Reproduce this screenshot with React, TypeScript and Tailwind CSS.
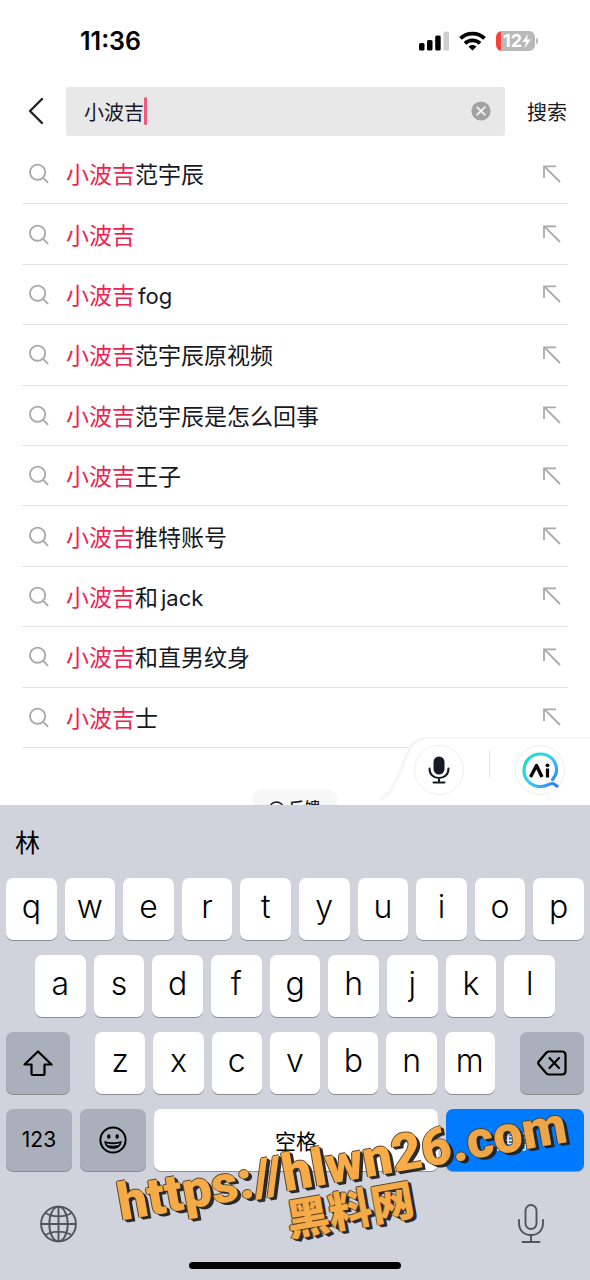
import React, { useState } from 'react';

interface Suggestion {
  rest: string;
  latin?: string;
}

const KEYWORD = '小波吉';

const suggestions: Suggestion[] = [
  { rest: '范宇辰' },
  { rest: '' },
  { rest: '', latin: 'fog' },
  { rest: '范宇辰原视频' },
  { rest: '范宇辰是怎么回事' },
  { rest: '王子' },
  { rest: '推特账号' },
  { rest: '和', latin: 'jack' },
  { rest: '和直男纹身' },
  { rest: '士' },
];

const topKeys = 'qwertyuiop'.split('');
const middleKeys = 'asdfghjkl'.split('');
const bottomKeys = 'zxcvbnm'.split('');

function StatusBar() {
  return (
    <div className="flex h-[81px] items-center justify-between pl-[80px] pr-[52px]">
      <span className="text-[25px] leading-8 font-semibold text-black">11:36</span>
      <div className="flex items-center gap-[10px]">
        <svg width="30" height="20" viewBox="0 0 30 20">
          <rect x="0" y="12" width="5.5" height="7.5" rx="1.6" fill="#000" />
          <rect x="8" y="9" width="5.5" height="10.5" rx="1.6" fill="#000" />
          <rect x="16.2" y="4.5" width="5.5" height="15" rx="1.6" fill="#000" />
          <rect x="24.5" y="0.5" width="5.5" height="19" rx="1.6" fill="#cfcfcf" />
        </svg>
        <svg width="27" height="20" viewBox="0 0 27 20" fill="none" stroke="#000" strokeWidth="3.8">
          <path d="M1.5 7.4C8.2 0.9 18.8 0.9 25.5 7.4" />
          <path d="M6 12.4C10.2 8.4 16.8 8.4 21 12.4" />
          <path d="M9.4 15.6C11.8 13.5 15.2 13.5 17.6 15.6L13.5 19.4Z" fill="#000" stroke="none" />
        </svg>
        <div className="flex items-center gap-[1px]">
          <div className="flex h-[20px] w-[39px] items-center justify-center overflow-hidden rounded-[6px] bg-linear-to-r from-[#f8403a] from-[12%] to-[#b9b9b9] to-[12%] pl-[3px] text-white">
            <span className="text-[18px] leading-5 font-bold">12</span>
            <svg width="9" height="14" viewBox="0 0 9 14" fill="currentColor">
              <path d="M6 0L0.3 8H4L2.8 14L8.8 5.6H5Z" />
            </svg>
          </div>
          <span className="h-[6px] w-[2px] rounded-r-full bg-[#b9b9b9]" />
        </div>
      </div>
    </div>
  );
}

function SearchHeader() {
  const [query, setQuery] = useState(KEYWORD);

  return (
    <form className="flex h-[60px] items-center pr-[23px]" onSubmit={(e) => e.preventDefault()}>
      <button type="button" aria-label="返回" className="flex h-10 w-[66px] items-center pl-[28px]">
        <svg width="16" height="28" viewBox="0 0 16 28" fill="none" stroke="#222" strokeWidth="2.4" strokeLinecap="round" strokeLinejoin="round">
          <path d="M14 2L2 14L14 26" />
        </svg>
      </button>
      <label className="flex h-[49px] flex-1 items-center rounded-[3px] bg-[#e8e8e8] pr-[14px] pl-[18px]">
        <input
          type="text"
          aria-label="搜索内容"
          value={query}
          onChange={(e) => setQuery(e.target.value)}
          className="field-sizing-content min-w-0 bg-transparent pt-[3px] text-[20px] leading-7 text-[#161823] caret-[#fe2c55] outline-none"
        />
        <span className="h-[28px] w-[3px] shrink-0 rounded-full bg-[#f4587c]" />
        <button type="button" aria-label="清除" className="ml-auto" onClick={() => setQuery('')}>
          <svg width="20" height="20" viewBox="0 0 20 20">
            <circle cx="10" cy="10" r="9.6" fill="#a2a2a2" />
            <path d="M6.3 6.3L13.7 13.7M13.7 6.3L6.3 13.7" stroke="#f4f4f4" strokeWidth="1.9" strokeLinecap="round" />
          </svg>
        </button>
      </label>
      <button type="submit" className="ml-[22px] pt-[3px] text-[20px] leading-7 text-[#161823]">
        搜索
      </button>
    </form>
  );
}

function SuggestionRow({ item }: { item: Suggestion }) {
  return (
    <li className="flex items-center border-b border-[#e4e4e4]">
      <button type="button" className="flex w-full items-center pl-[7px] text-left">
        <svg width="20" height="21" viewBox="0 0 20 21" fill="none" stroke="#a9a9ab" strokeWidth="1.9" strokeLinecap="round">
          <circle cx="8.6" cy="9.2" r="7.6" />
          <path d="M14.2 14.8L18.6 19.4" />
        </svg>
        <span className="ml-[17px] flex-1 pt-[3px] text-[23px] leading-8 text-[#161823]">
          <span className="text-[#ea2553]">{KEYWORD}</span>
          {item.rest}
          {item.latin && <span className="ml-[3px] text-[22px]">{item.latin}</span>}
        </span>
        <svg className="mr-[7px]" width="18" height="18" viewBox="0 0 18 18" fill="none" stroke="#aaaaac" strokeWidth="1.8">
          <path d="M1 13V1.4H13M1.4 1.4L17 17" />
        </svg>
      </button>
    </li>
  );
}

function AssistantPanel() {
  return (
    <div className="absolute right-0 bottom-0 flex h-[68px] w-[210px] items-center justify-end pr-[25px] pb-[2px]">
      <svg className="absolute inset-0" width="210" height="68" viewBox="0 0 210 68" fill="none">
        <path d="M0 68C11 62 15 48 21 34C29 10 32 0 54 0H210V68Z" fill="#fff" />
        <path d="M0 62C11 58 15 46 21 33C29 10 32 0 54 0H210" stroke="#f5f5f6" strokeWidth="3" />
      </svg>
      <button type="button" aria-label="语音搜索" className="relative flex h-[50px] w-[50px] items-center justify-center rounded-full border border-[#eeeeee] bg-white">
        <svg width="22" height="28" viewBox="0 0 22 28" fill="none" stroke="#161823" strokeWidth="2" strokeLinecap="round">
          <rect x="5.5" y="0.5" width="11" height="18" rx="5.5" fill="#161823" stroke="none" />
          <path d="M1.5 12.5C1.5 18.5 5.5 22 11 22C16.5 22 20.5 18.5 20.5 12.5M11 22V26.5M5.5 26.5H16.5" />
        </svg>
      </button>
      <span className="relative mx-[25px] mb-3 h-[28px] w-px bg-[#e3e3e5]" />
      <button type="button" aria-label="AI 搜索" className="relative h-[50px] w-[50px] rounded-full border border-[#eeeeee] bg-white">
        <svg width="48" height="48" viewBox="0 0 48 48" fill="none">
          <defs>
            <linearGradient id="ring" x1="8" y1="12" x2="42" y2="40" gradientUnits="userSpaceOnUse">
              <stop offset="0" stopColor="#12e3c3" />
              <stop offset="0.45" stopColor="#3bcdf6" />
              <stop offset="1" stopColor="#3178ee" />
            </linearGradient>
          </defs>
          <path
            d="M36.5 33.5C39 30.5 40.5 27.5 40.5 24C40.5 14.5 33.5 8 24.5 8C15 8 8 15 8 24.5C8 33.5 15 40.5 24.5 40.5C30.5 40.5 33 37.5 36.5 37.5C39 37.5 39 39.5 41 40"
            stroke="url(#ring)"
            strokeWidth="3.2"
            strokeLinecap="round"
          />
          <path d="M14.5 31L20.5 19.5L26 31" stroke="#080808" strokeWidth="3.4" strokeLinejoin="round" />
          <path d="M31.5 22.5V31.5" stroke="#080808" strokeWidth="3.2" />
          <circle cx="31.5" cy="19.3" r="1.9" fill="#080808" />
        </svg>
      </button>
    </div>
  );
}

function LetterKey({ letter }: { letter: string }) {
  return (
    <button type="button" className="h-[62px] min-w-0 flex-1 rounded-[7px] bg-white pb-[4px] text-[32px] leading-9 font-[350] text-black shadow-[0_1px_0_#8b8d92]">
      {letter}
    </button>
  );
}

function Keyboard() {
  return (
    <section className="relative flex h-[475px] shrink-0 flex-col overflow-hidden bg-[#d0d3db]">
      <div className="flex h-[73px] items-center pl-[15px]">
        <button type="button" className="pt-[3px] text-[25px] leading-9 text-black">林</button>
      </div>
      <div className="flex flex-col gap-[15px] px-[6px]">
        <div className="flex gap-2">
          {topKeys.map((letter) => (
            <LetterKey key={letter} letter={letter} />
          ))}
        </div>
        <div className="flex gap-2 px-[29px]">
          {middleKeys.map((letter) => (
            <LetterKey key={letter} letter={letter} />
          ))}
        </div>
        <div className="flex gap-[25px]">
          <button type="button" aria-label="Shift" className="flex w-16 items-center justify-center rounded-[7px] bg-[#a9afbb] shadow-[0_1px_0_#8b8d92]">
            <svg width="30" height="26" viewBox="0 0 30 26" fill="none" stroke="#000" strokeWidth="2.2" strokeLinejoin="round">
              <path d="M15 1.5L28.5 14.5H21.5V23.5Q21.5 25 20 25H10Q8.5 25 8.5 23.5V14.5H1.5Z" />
            </svg>
          </button>
          <div className="flex flex-1 gap-2">
            {bottomKeys.map((letter) => (
              <LetterKey key={letter} letter={letter} />
            ))}
          </div>
          <button type="button" aria-label="删除" className="flex w-16 items-center justify-center rounded-[7px] bg-[#a9afbb] shadow-[0_1px_0_#8b8d92]">
            <svg width="30" height="26" viewBox="0 0 30 26" fill="none" stroke="#000" strokeWidth="2.2" strokeLinecap="round" strokeLinejoin="round">
              <path d="M12 1.5H25Q28.5 1.5 28.5 5V21Q28.5 24.5 25 24.5H12Q10.5 24.5 9.5 23.5L1.8 14.5Q0.7 13 1.8 11.5L9.5 2.5Q10.5 1.5 12 1.5Z" />
              <path d="M12.5 8L22 18M22 8L12.5 18" />
            </svg>
          </button>
        </div>
        <div className="flex h-[62px] gap-2">
          <button type="button" className="w-[66px] rounded-[7px] bg-[#a9afbb] text-[21px] text-black shadow-[0_1px_0_#8b8d92]">
            123
          </button>
          <button type="button" aria-label="表情" className="flex w-[66px] items-center justify-center rounded-[7px] bg-[#a9afbb] shadow-[0_1px_0_#8b8d92]">
            <svg width="28" height="28" viewBox="0 0 28 28">
              <circle cx="14" cy="14" r="12.6" fill="none" stroke="#000" strokeWidth="2" />
              <ellipse cx="9.8" cy="10.5" rx="1.7" ry="2.2" />
              <ellipse cx="18.2" cy="10.5" rx="1.7" ry="2.2" />
              <path d="M5.3 15C10 16.8 18 16.8 22.7 15C22.5 20 19 22.8 14 22.8C9 22.8 5.5 20 5.3 15Z" />
              <path d="M7.5 17.2C11.5 18.6 16.5 18.6 20.5 17.2L19.8 18.9C16 20 12 20 8.2 18.9Z" fill="#a9afbb" />
            </svg>
          </button>
          <button type="button" className="flex-1 rounded-[7px] bg-white pt-[3px] text-[21px] text-black shadow-[0_1px_0_#8b8d92]">
            空格
          </button>
          <button type="button" className="w-[138px] rounded-[7px] bg-[#007aff] pt-[3px] text-[20px] text-white shadow-[0_1px_0_#8b8d92]">
            搜索
          </button>
        </div>
      </div>

      <div className="mt-[33px] flex items-center justify-between px-[40px]">
        <button type="button" aria-label="切换键盘">
          <svg width="37" height="38" viewBox="0 0 37 38" fill="none" stroke="#50545c" strokeWidth="1.9">
            <circle cx="18.5" cy="19" r="17.4" />
            <ellipse cx="18.5" cy="19" rx="9.2" ry="17.4" />
            <path d="M18.5 1.6V36.4M1.1 19H35.9M5.5 8C13 12.5 24 12.5 31.5 8M5.5 30C13 25.5 24 25.5 31.5 30" />
          </svg>
        </button>
        <button type="button" aria-label="语音输入" className="mr-[5px]">
          <svg width="28" height="40" viewBox="0 0 28 40" fill="none" stroke="#50545c" strokeWidth="1.9" strokeLinecap="round">
            <rect x="8.5" y="1" width="11" height="24" rx="5.5" />
            <path d="M2 16V19C2 26.5 7 31 14 31C21 31 26 26.5 26 19V16M14 31V38M5.5 38H22.5" />
          </svg>
        </button>
      </div>
      <div className="mx-auto mt-auto mb-[11px] h-[7px] w-[212px] rounded-full bg-black" />

      {/* site stamp over the lower keys */}
      <div className="pointer-events-none absolute right-[10px] bottom-[47px] flex w-[468px] -rotate-[10deg] flex-col items-center font-['Roboto','Noto_Sans_CJK_SC',sans-serif] font-black whitespace-nowrap text-[#f8a940] opacity-95 [text-shadow:-1px_0_0_#5a4020,0_-1px_0_#5a4020,1px_1px_0_#222,2px_2px_0_#222,3px_3px_0_#222]">
        <span className="text-[52px] leading-[50px]">https://hlwn26.com</span>
        <span className="text-[43px] leading-[44px]">黑料网</span>
      </div>
    </section>
  );
}

export default function App() {
  return (
    <div className="flex h-screen flex-col overflow-hidden bg-white font-['Inter','Noto_Sans_CJK_SC',sans-serif]">
      <StatusBar />
      <SearchHeader />
      <main className="relative min-h-0 flex-1 overflow-hidden pt-[3px]">
        <ul className="mx-[22px] grid h-[604px] auto-rows-fr">
          {suggestions.map((item, index) => (
            <SuggestionRow key={index} item={item} />
          ))}
        </ul>
        <button type="button" className="mx-auto mt-[42px] flex h-9 w-[84px] items-center justify-center gap-1 rounded-[8px] bg-[#f7f7f7] text-[16px] leading-6 font-medium text-[#161823]">
          <svg width="15" height="15" viewBox="0 0 15 15" fill="none" stroke="currentColor" strokeWidth="1.5">
            <circle cx="7.5" cy="7.5" r="6.6" />
            <path d="M7.5 4V8.5M7.5 10V11.5" />
          </svg>
          反馈
        </button>
        <AssistantPanel />
      </main>
      <Keyboard />
    </div>
  );
}
